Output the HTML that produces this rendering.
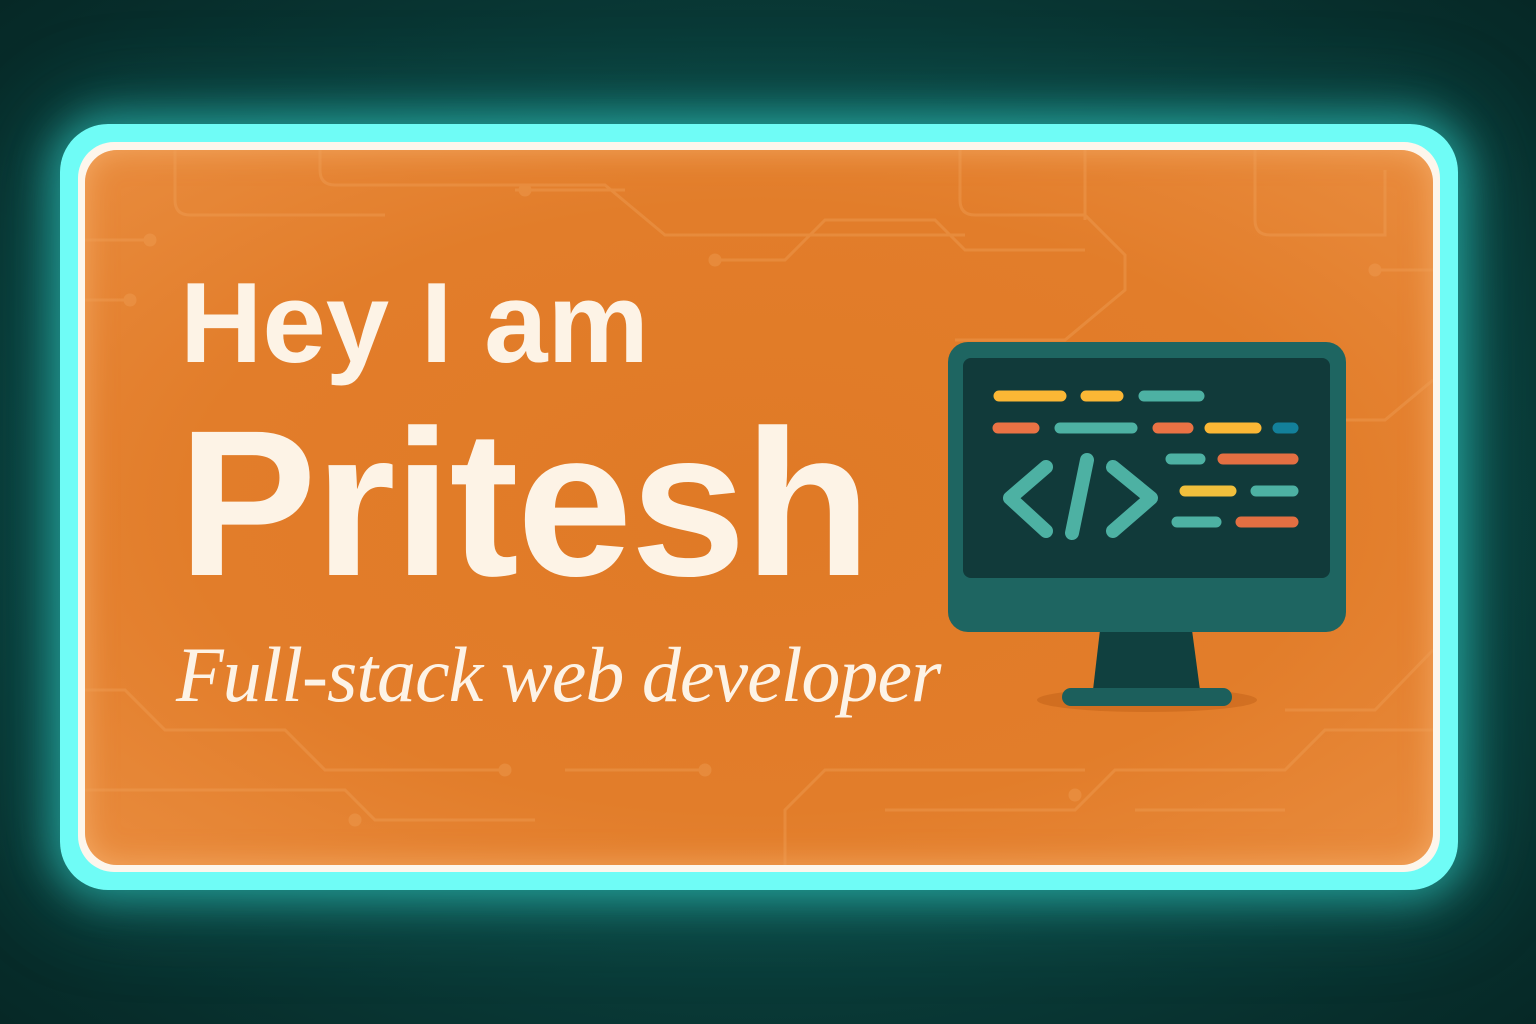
<!DOCTYPE html>
<html><head><meta charset="utf-8"><style>
html,body{margin:0;padding:0}
body{width:1536px;height:1024px;overflow:hidden;position:relative;background:radial-gradient(ellipse at 50% 50%,#0d5a55 0%,#0a3f3c 55%,#062826 100%);font-family:"Liberation Sans",sans-serif}
.glow{position:absolute;left:60px;top:124px;width:1398px;height:766px;border-radius:48px;box-shadow:0 0 40px 10px rgba(60,240,230,.45),0 0 90px 20px rgba(40,200,190,.25)}
.frame{position:absolute;left:60px;top:124px;width:1398px;height:766px;border-radius:48px;background:#6ffcf6}
.white{position:absolute;left:78px;top:142px;width:1362px;height:730px;border-radius:36px;background:#fdf6ec}
.card{position:absolute;left:85px;top:150px;width:1348px;height:715px;border-radius:32px;background:radial-gradient(ellipse at 50% 50%,#e07a26 0%,#e27d2a 60%,#e98c3e 100%);box-shadow:inset 0 0 30px rgba(255,200,140,.5);overflow:hidden}
.t{position:absolute;color:#fdf3e6;font-weight:bold;white-space:nowrap}
</style></head><body>
<div class="glow"></div><div class="frame"></div><div class="white"></div>
<div class="card">
<svg width="1348" height="715" style="position:absolute;left:0;top:0" fill="none" stroke="#f0a057" stroke-width="3" opacity=".4">
<path d="M90 0 V50 Q90 65 105 65 H300"/><path d="M235 0 V20 Q235 35 250 35 H520 L580 85 H880"/>
<path d="M0 90 H65"/><circle cx="65" cy="90" r="5" fill="#f0a057"/>
<path d="M0 150 H45"/><circle cx="45" cy="150" r="5" fill="#f0a057"/>
<path d="M430 40 H540"/><circle cx="440" cy="40" r="5" fill="#f0a057"/>
<path d="M630 110 H700 L740 70 H850 L880 100 H1000"/><circle cx="630" cy="110" r="5" fill="#f0a057"/>
<path d="M875 0 V50 Q875 65 890 65 H1000 L1040 105 V140 L980 190 H870"/>
<path d="M1170 0 V70 Q1170 85 1185 85 H1300 V20"/><path d="M1000 0 V70"/>
<path d="M1348 120 H1290"/><circle cx="1290" cy="120" r="5" fill="#f0a057"/>
<path d="M1348 230 L1300 270 H1260"/>
<path d="M0 540 H40 L80 580 H200 L240 620 H420"/><circle cx="420" cy="620" r="5" fill="#f0a057"/>
<path d="M0 640 H260 L290 670 H450"/><circle cx="270" cy="670" r="5" fill="#f0a057"/>
<path d="M480 620 H620"/><circle cx="620" cy="620" r="5" fill="#f0a057"/>
<path d="M700 715 V660 L740 620 H1000"/><path d="M800 660 H990 L1030 620 H1200 L1240 580 H1348"/>
<circle cx="990" cy="645" r="5" fill="#f0a057"/><path d="M1050 660 H1200"/>
<path d="M1348 500 L1290 560 H1200"/>
</svg>
</div>
<div class="t" style="left:180px;top:258px;font-size:114px;letter-spacing:0px">Hey I am</div>
<div class="t" style="left:178px;top:385px;font-size:208px;letter-spacing:-2px">Pritesh</div>
<div class="t" style="left:176px;top:630px;font-size:78px;font-weight:normal;font-style:italic;font-family:'Liberation Serif',serif;letter-spacing:-1px">Full-stack web developer</div>
<svg width="1536" height="1024" style="position:absolute;left:0;top:0">
<ellipse cx="1147" cy="700" rx="110" ry="12" fill="#b85a15" opacity=".4"/>
<path d="M1100 630 H1192 L1200 690 H1093 Z" fill="#10403f"/>
<rect x="1062" y="688" width="170" height="18" rx="9" fill="#1c5f5c"/>
<rect x="948" y="342" width="398" height="290" rx="20" fill="#1e6561"/>
<rect x="963" y="358" width="367" height="220" rx="8" fill="#113a3a"/>
<g stroke-linecap="round" stroke-width="11">
<path d="M999 396H1061M1086 396H1118" stroke="#fbb735"/><path d="M1144 396H1199" stroke="#4db1a3"/>
<path d="M998 428H1034M1158 428H1188" stroke="#ea7244"/><path d="M1060 428H1132" stroke="#4db1a3"/><path d="M1210 428H1256" stroke="#fbb735"/><path d="M1278 428H1293" stroke="#13809a"/>
<path d="M1171 459H1200M1256 491H1293M1177 522H1216" stroke="#4db1a3"/><path d="M1223 459H1293M1241 522H1293" stroke="#e36f42"/>
<path d="M1185 491H1231" stroke="#f1bf3c"/>
</g>
<g stroke="#4db1a3" stroke-width="14" stroke-linecap="round" stroke-linejoin="round" fill="none">
<path d="M1046 467L1010 498L1046 531"/><path d="M1087 460L1072 533"/><path d="M1113 467L1151 498L1113 531"/>
</g>
</svg>
</body></html>
